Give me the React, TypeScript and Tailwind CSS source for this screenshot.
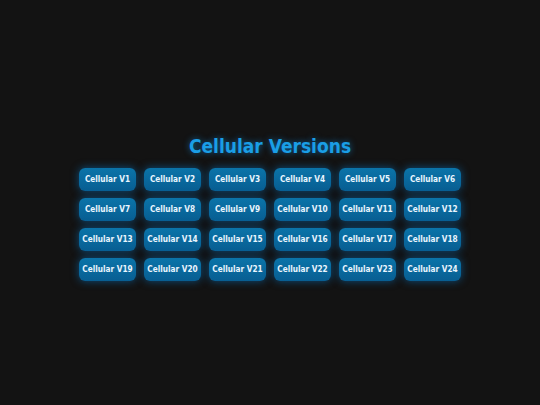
export default function App() {
  const versions = Array.from({ length: 24 }, (_, i) => i + 1);
  return (
    <div
      className="w-[540px] h-[405px] bg-[#131313] flex flex-col items-center pt-[134px]"
      style={{ fontFamily: '"DejaVu Sans Condensed", "DejaVu Sans", Verdana, sans-serif' }}
    >
      <h1 className="text-[19px] leading-[24px] font-bold text-[#1a9ee6] [text-shadow:0_0_6px_rgba(20,140,220,0.7)]">
        Cellular Versions
      </h1>
      <div className="mt-[10px] grid grid-cols-[repeat(6,57px)] gap-x-[8px] gap-y-[7px]">
        {versions.map((v) => (
          <button
            key={v}
            className="h-[23px] rounded-[6px] bg-gradient-to-b from-[#0b74a9] to-[#085e92] text-[8.2px] font-bold text-[#eaf6ff] whitespace-nowrap flex items-center justify-center shadow-[0_0_8px_rgba(10,120,200,0.6)]"
          >
            Cellular V{v}
          </button>
        ))}
      </div>
    </div>
  );
}
